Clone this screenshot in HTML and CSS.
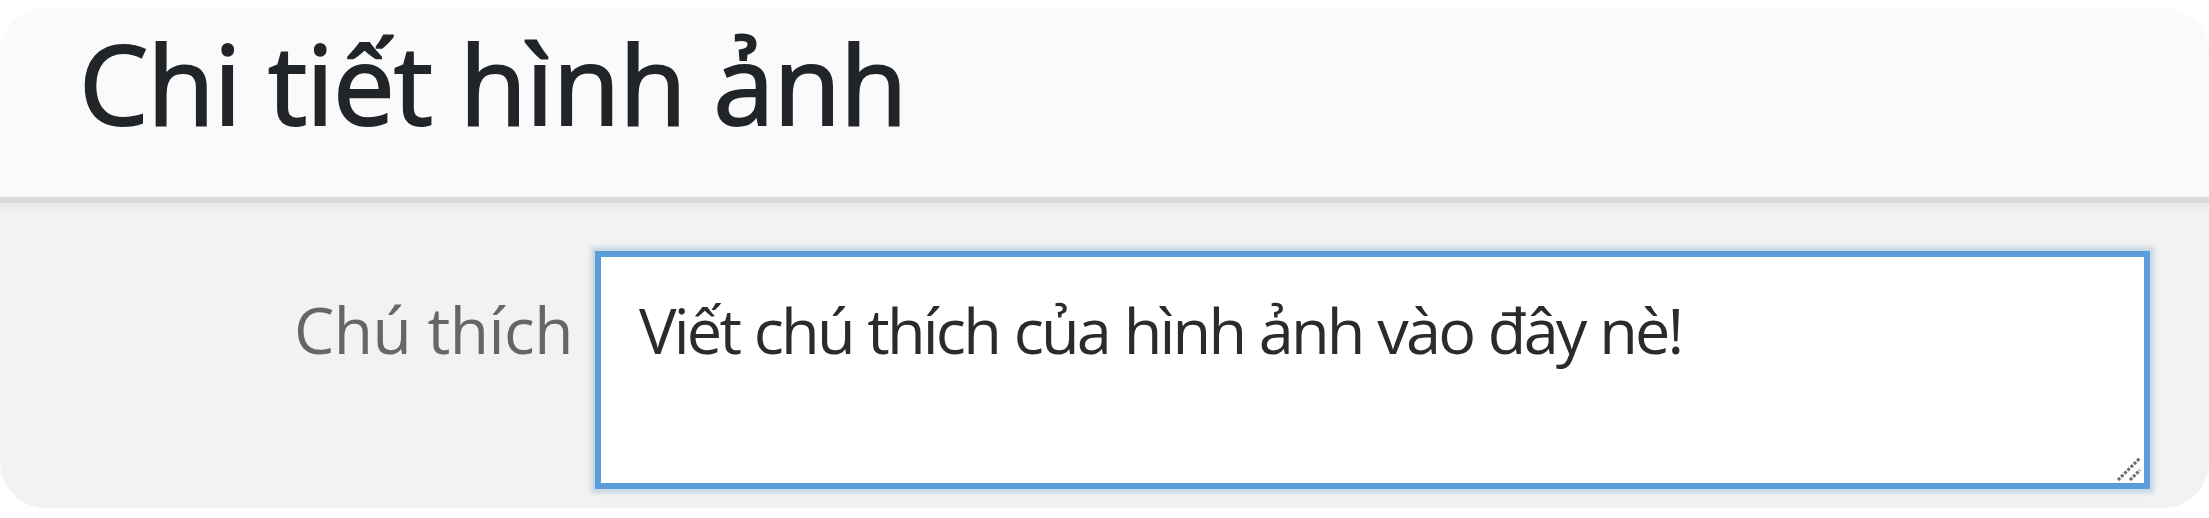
FILE: index.html
```html
<!DOCTYPE html>
<html lang="vi">
<head>
<meta charset="utf-8">
<title>Chi tiết hình ảnh</title>
<link rel="stylesheet" href="styles.css">
</head>
<body>
  <section class="panel">
    <header class="panel-header">
      <h1 class="panel-title">Chi tiết hình ảnh</h1>
    </header>
    <div class="panel-body">
      <div class="field-row">
        <label class="field-label" for="caption">Chú thích</label>
        <div class="textarea-wrap">
          <textarea id="caption" class="field-input">Viết chú thích của hình ảnh vào đây nè!</textarea>
          <svg class="resize-grip" width="26" height="26" viewBox="0 0 26 26" aria-hidden="true">
            <line x1="2" y1="25" x2="24" y2="3" />
            <line x1="14" y1="25" x2="24" y2="15" />
          </svg>
        </div>
      </div>
    </div>
  </section>
</body>
</html>
```

FILE: styles.css
```css
html, body {
  margin: 0;
  padding: 0;
  background: #ffffff;
}

body {
  font-family: "Open Sans", "Noto Sans", "Liberation Sans", sans-serif;
  width: 2209px;
  height: 518px;
  overflow: hidden;
}

.panel {
  margin-top: 8px;
  height: 500px;
  border-radius: 46px;
  background: #f2f2f2;
  overflow: hidden;
}

.panel-header {
  position: relative;
  height: 189px;
  background: #fafafa;
  border-bottom: 6px solid #d9d9d9;
  box-shadow: 0 3px 9px rgba(0, 0, 0, 0.07);
  box-sizing: content-box;
}

.panel-title {
  margin: 0;
  padding: 19px 0 0 79px;
  font-size: 110px;
  line-height: 110px;
  font-weight: 400;
  color: #212529;
  letter-spacing: -1px;
  -webkit-text-stroke: 2px #212529;
}

.panel-body {
  padding-top: 48px;
}

.field-row {
  display: grid;
  grid-template-columns: 573px 1555px;
  column-gap: 22px;
  align-items: start;
}

.field-label {
  padding-top: 31px;
  text-align: right;
  font-size: 64px;
  line-height: 96px;
  color: #666666;
  letter-spacing: -0.5px;
}

.textarea-wrap {
  position: relative;
  width: 1555px;
  height: 238px;
}

.field-input {
  display: block;
  box-sizing: border-box;
  width: 100%;
  height: 100%;
  margin: 0;
  padding: 25px 38px;
  border: 6px solid #5b9dd9;
  background: #ffffff;
  font-family: inherit;
  font-size: 63px;
  line-height: 96px;
  color: #2b2b2b;
  letter-spacing: -2.8px;
  word-spacing: 1px;
  resize: none;
  outline: none;
  overflow: hidden;
  box-shadow: 0 0 4px 4px rgba(120, 170, 205, 0.35);
}

.resize-grip {
  position: absolute;
  right: 8px;
  bottom: 8px;
}

.resize-grip line {
  stroke: #6b6b6b;
  stroke-width: 3;
  stroke-dasharray: 3 1.5;
}
```
